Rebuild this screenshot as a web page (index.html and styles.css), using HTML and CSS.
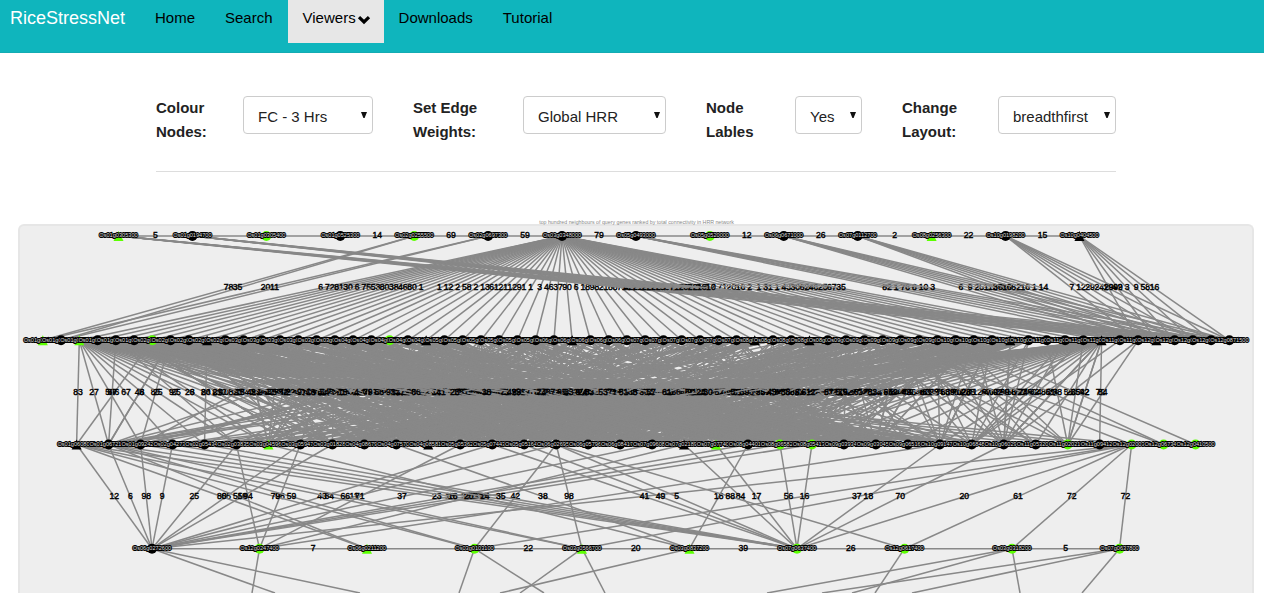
FILE: index.html
```html
<!DOCTYPE html>
<html lang="en">
<head>
<meta charset="utf-8">
<title>RiceStressNet</title>
<link rel="stylesheet" href="styles.css">
</head>
<body>
<header class="navbar">
  <a class="brand">RiceStressNet</a>
  <nav class="menu">
    <a class="item">Home</a>
    <a class="item">Search</a>
    <a class="item active">Viewers<svg class="chevron" width="14" height="10" viewBox="0 0 14 10"><path d="M2 2.2 7 7 12 2.2" fill="none" stroke="#000" stroke-width="3.2"/></svg></a>
    <a class="item">Downloads</a>
    <a class="item">Tutorial</a>
  </nav>
</header>
<section class="controls">
  <label class="label nodes">Colour Nodes:</label>
  <div class="select s-colour"><span>FC - 3 Hrs</span><svg class="arrow" viewBox="0 0 6 6"><path d="M0 0H6L3.6 6H2.4Z"/></svg></div>
  <label class="label weights">Set Edge Weights:</label>
  <div class="select s-weights"><span>Global HRR</span><svg class="arrow" viewBox="0 0 6 6"><path d="M0 0H6L3.6 6H2.4Z"/></svg></div>
  <label class="label lables">Node Lables</label>
  <div class="select s-lables"><span>Yes</span><svg class="arrow" viewBox="0 0 6 6"><path d="M0 0H6L3.6 6H2.4Z"/></svg></div>
  <label class="label change">Change Layout:</label>
  <div class="select s-layout"><span>breadthfirst</span><svg class="arrow" viewBox="0 0 6 6"><path d="M0 0H6L3.6 6H2.4Z"/></svg></div>
</section>
<p class="caption">top hundred neighbours of query genes ranked by total connectivity in HRR network</p>
<main class="network"><svg id="graph" class="graph" width="1232" height="367" viewBox="20 226 1232 367"></svg></main>
<script src="graph.js"></script>
</body>
</html>
```
FILE: styles.css
```css
* { box-sizing: border-box; }
html, body { height: 100%; }
body {
  margin: 0;
  overflow: hidden;
  background: #fff;
  color: #222;
  font-family: "Liberation Sans", Arial, sans-serif;
}
.navbar {
  display: flex;
  height: 53px;
  padding-left: 10px;
  background: #0fb5bd;
  border-bottom: 1px solid #14acb3;
}
.brand { width: 130px; font-size: 18px; line-height: 36px; color: #fff; }
.menu { display: flex; align-items: flex-start; }
.item {
  height: 43px;
  padding: 0 15px;
  font-size: 15px;
  line-height: 36px;
  color: #000;
  white-space: nowrap;
}
.item.active { width: 96px; background: #e7e7e7; }
.chevron { margin: 0 -2px -2px 1px; }
.controls {
  display: flex;
  align-items: flex-start;
  width: 960px;
  height: 119px;
  margin: 0 0 0 156px;
  padding-top: 43px;
  border-bottom: 1px solid #ddd;
}
.label { font-size: 15px; font-weight: bold; line-height: 24px; }
.nodes { width: 87px; padding-right: 20px; }
.weights { width: 110px; padding-right: 30px; }
.lables { width: 89px; padding-right: 30px; }
.change { width: 96px; padding-right: 20px; }
.select {
  display: flex;
  justify-content: space-between;
  height: 38px;
  padding: 2px 5px 0 14px;
  border: 1px solid #ccc;
  border-radius: 4px;
  font-size: 15px;
  line-height: 35px;
  white-space: nowrap;
}
.arrow { width: 6px; height: 6px; margin-top: 13px; fill: #111; }
.s-colour { width: 130px; margin-right: 40px; }
.s-weights { width: 143px; margin-right: 40px; }
.s-lables { width: 67px; margin-right: 40px; }
.s-layout { width: 118px; }
.caption {
  height: 8px;
  margin: 46px 0 -2px;
  padding-left: 9px;
  font-size: 5.25px;
  line-height: 8px;
  text-align: center;
  color: #888;
}
.network {
  width: 1236px;
  height: 369px;
  margin-left: 18px;
  background: #eee;
  border: 2px solid #e6e6e6;
  border-bottom: 0;
  border-radius: 6px 6px 0 0;
  overflow: hidden;
}
.graph { display: block; }
.edge { stroke: #888; stroke-width: 1.5; }
.weight {
  font-size: 8.6px;
  text-anchor: middle;
  fill: #000;
  stroke: #000;
  stroke-width: 0.4;
}
.gene {
  font-size: 5.6px;
  text-anchor: middle;
  fill: #ddd;
  stroke: #000;
  stroke-width: 2;
  paint-order: stroke;
}
.node { fill: #000; }
.node.up { fill: #5cff00; }
```
FILE: graph.js
```javascript
const svg = document.getElementById('graph');
const NS = 'http://www.w3.org/2000/svg';

function add(name, attrs, text) {
  const el = document.createElementNS(NS, name);
  for (const key in attrs) el.setAttribute(key, attrs[key]);
  if (text !== undefined) el.textContent = text;
  svg.appendChild(el);
}

// Small deterministic generator, so that the layout is stable between loads.
let seed = 4177;
function rand() {
  seed = (seed * 1103515245 + 12345) % 2147483648;
  return seed / 2147483648;
}
const weight = () => 1 + Math.floor(rand() * 98);

function row(count, x, step, y, up, triangles) {
  return Array.from({ length: count }, (_, i) => ({
    x: x + step * i, y, up: up.includes(i), tri: triangles.includes(i)
  }));
}
const A = row(14, 118.5, 73.92, 236, [0, 2, 4, 8, 11], [0, 11, 13]);
const B = row(66, 42.8, 18.255, 340.3, [0, 2, 6, 19], [0, 2, 9, 21, 29, 39, 42, 53, 58, 61]);
const C = row(36, 76.6, 31.97, 444.5, [6, 20, 22, 23, 31, 33, 34, 35], [0, 6, 11, 19, 20]);
const D = row(10, 152, 107.5, 548.7, [1, 2, 3, 4, 5, 6, 7, 8, 9], [2, 4, 5]);

function edge(a, b, label) {
  add('line', { class: 'edge', x1: a.x, y1: a.y, x2: b.x, y2: b.y });
  if (label !== '') add('text', { class: 'weight', x: (a.x + b.x) / 2, y: (a.y + b.y) / 2 + 2.1 }, label);
}
function chain(list, labels) {
  labels.forEach((label, i) => edge(list[i], list[i + 1], label));
}

// First tier to second tier.
const hub = [6, 72, 81, 30, 6, 75, 53, 80, 38, 46, 80, 1, '', 1, 12, 2, 58, 2, 13, 61, 21, 12, 91, 1, 3, 46, 37, 90, 6, 18,
  98, 21, 88, 71, 34, 51, 61, 91, 34, 42, 10, 22, 56, 7, 71, 20, 16, 2, 1, 31, 1, 43, 30, 62, 46, 29, 56, 58];
hub.splice(50, 8, 1, 43, 30, 62, 46, 25, 67, 35);
hub.forEach((w, i) => edge(A[6], B[i + 2], w));
edge(A[4], B[0], 78); edge(A[4], B[1], 35);
edge(A[5], B[0], 20); edge(A[5], B[1], 11);
const fans = {
  0: [42, 21, 22, 22, 56, 8], 1: [7, 71, 20, 22, 16, 10], 7: [82, 1, 76, 8, 10, 3],
  9: [6, 9, 25, 11, 27, 36], 10: [36, 16, 62, 16, 1, 14],
  12: [7, 12, 29, 24, 19, 42], 13: [29, 99, 3, 9, 58, 16]
};
for (const i in fans) fans[i].forEach((w, k) => edge(A[i], B[60 + k], w));

// Second tier to third tier.
const rest = [];
for (let i = 0; i < 34; i++) rest.push([2, i]);
for (let i = 3; i < 32; i++) rest.push([58, i]);
for (let n = 0; n < 700; n++) {
  const b = 4 + Math.floor(Math.pow(rand(), 1.15) * 51);
  const c = 4 + Math.floor((rand() * 0.7 + rand() * 0.3) * 26);
  rest.push([b, c]);
}
for (let n = 0; n < 32; n++) rest.push([45 + Math.floor(rand() * 14), 27 + Math.floor(rand() * 5)]);
for (let n = 0; n < 14; n++) rest.push([5 + Math.floor(rand() * 45), 1 + Math.floor(rand() * 3)]);
for (let i = rest.length - 1; i > 0; i--) {
  const j = Math.floor(rand() * (i + 1));
  [rest[i], rest[j]] = [rest[j], rest[i]];
}
rest.push([6, 0], [4, 1], [7, 1], [58, 32], [60, 31], [60, 29], [59, 28], [45, 33], [46, 34], [49, 34], [50, 35]);
rest.forEach(([b, c]) => edge(B[b], C[c], weight()));

// Third tier to fourth tier: [third, fourth, weight].
[[0, 0, 12], [1, 0, 6], [2, 0, 98], [3, 0, 9], [5, 0, 25], [7, 0, 65], [8, 0, 19], [13, 0, 43], [15, 0, 11],
 [18, 0, 37], [21, 0, 18], [22, 0, 35], [23, 0, 54], [33, 0, ''],
 [5, 1, 94], [7, 1, 98], [12, 1, 71], [19, 1, 20], [27, 1, ''],
 [0, 2, 80], [1, 2, 55], [0, 3, 79], [1, 3, 59], [15, 3, 42], [33, 3, ''],
 [0, 4, 64], [1, 4, 66], [15, 4, 98], [33, 4, 37],
 [6, 5, 11], [10, 5, 38], [21, 5, 18],
 [0, 6, 23], [1, 6, 18], [2, 6, 20], [3, 6, 14], [4, 6, 35], [13, 6, 41], [14, 6, 49], [15, 6, 5],
 [19, 6, 84], [20, 6, 17], [22, 6, 56], [23, 6, 16], [27, 6, 18], [29, 6, 70], [33, 6, 20],
 [15, 7, 88], [33, 7, 61], [33, 8, 72], [33, 9, 72]
].forEach(([c, d, w]) => edge(C[c], D[d], w));

chain(A, [5, '', '', 14, 69, 59, 79, '', 12, 26, 2, 22, 15]);
chain(D, ['', 7, '', 22, 20, 39, 26, '', 5]);

// Edges that leave the visible area: [fourth, x at y = 593].
[[0, 275], [0, 360], [1, 252], [3, 459], [3, 544], [4, 520], [4, 605], [5, 500], [7, 875],
 [8, 767], [8, 852], [8, 1020], [9, 822], [9, 912], [9, 1082]].forEach(([d, x]) => {
  edge(D[d], { x, y: 593 }, '');
});

const ids = [
  ['01g0305300', '01g0194700', '01g0305400', '01g0525300', '02g0255500', '02g0697300', '03g0348000', '05g0493000',
   '05g0520000', '06g0671000', '07g0112700', '08g0256300', '10g0198200', '10g0404500'],
  [], [],
  ['06g0272600', '12g0247400', '06g0211200', '03g0103100', '03g0566700', '03g0837200', '07g0637400', '12g0617400',
   '03g0318200', '07g0637800']
];
[A, B, C, D].forEach((list, r) => list.forEach((n, i) => {
  const cls = n.up ? 'node up' : 'node';
  if (n.tri) add('path', { class: cls, d: `M${n.x} ${n.y - 5}l5 10h-10z` });
  else add('circle', { class: cls, cx: n.x, cy: n.y, r: 5 });
  const chr = String(1 + Math.floor(i * 12 / list.length)).padStart(2, '0');
  const id = ids[r][i] || chr + 'g0' + String(100 + Math.floor(rand() * 899)) + '00'.padStart(3, String(i % 10));
  add('text', { class: 'gene', x: n.x, y: n.y + 1.2 }, 'Os' + id);
}));
```
